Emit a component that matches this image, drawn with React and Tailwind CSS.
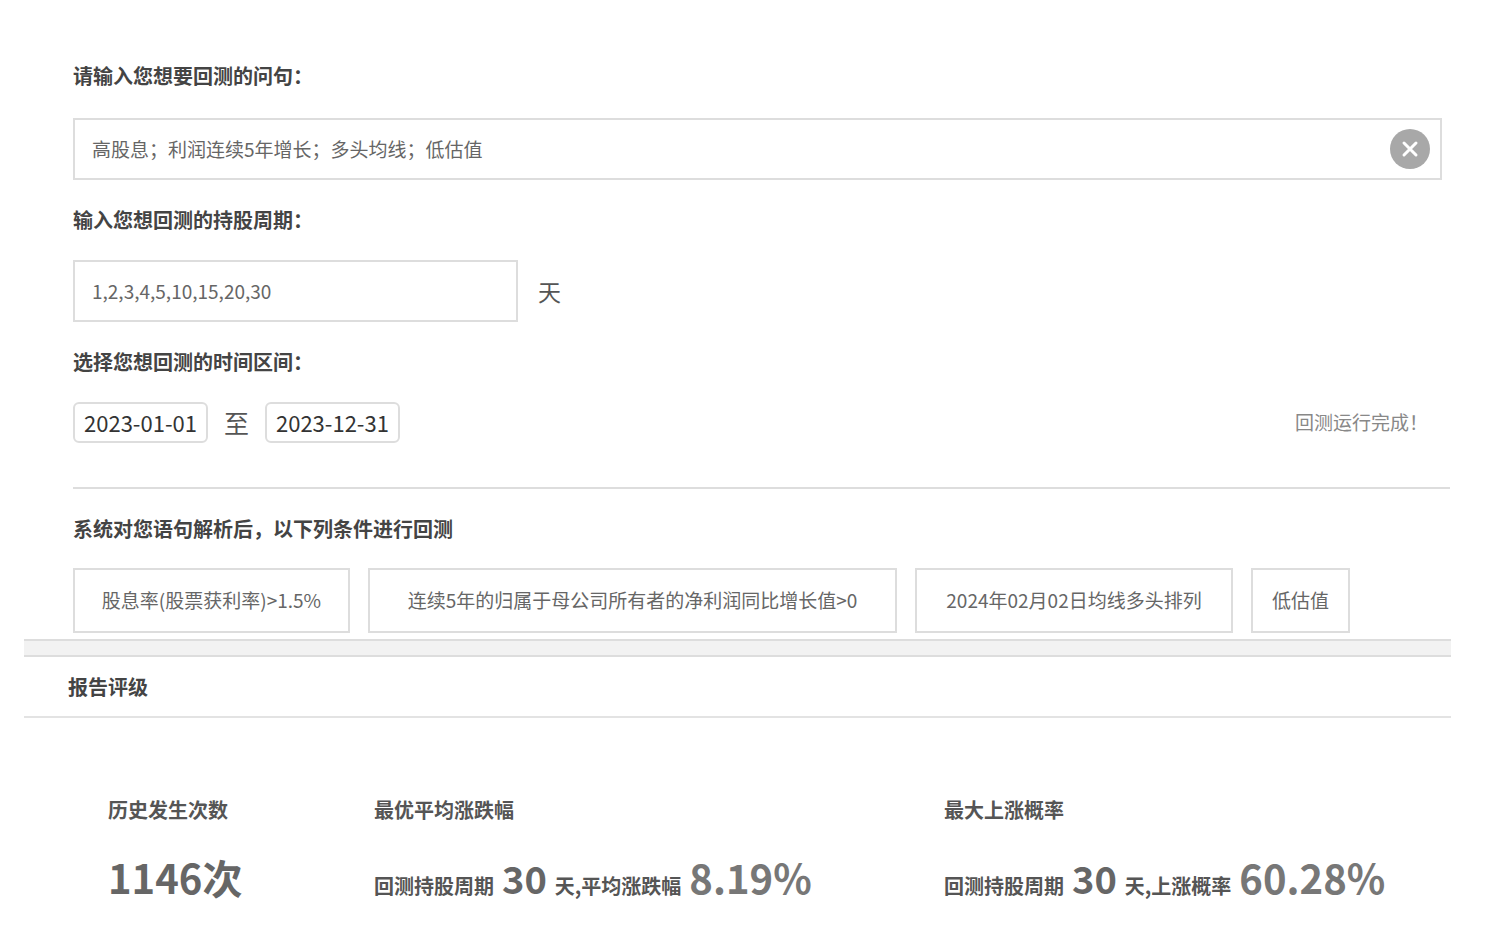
export default function App() {
  const f = { fontFamily: '"Noto Sans CJK SC", "Liberation Sans", sans-serif' };
  const tiles = [["股息率(股票获利率)>1.5%", "w-[277px]"], ["连续5年的归属于母公司所有者的净利润同比增长值>0", "w-[529px]"], ["2024年02月02日均线多头排列", "w-[318px]"], ["低估值", "w-[99px]"]];
  return (
    <div style={f} className="w-[1489px] h-[952px] bg-white text-[#555] overflow-hidden">
      <div className="pl-[73px] pr-[39px] pt-[60px]">
        <div className="text-[20px] font-bold text-[#444] h-[32px] leading-[32px]">请输入您想要回测的问句：</div>
        <div className="mt-[26px] w-[1369px] h-[62px] border-2 border-[#ddd] flex items-center pl-[17px] pr-[10px] justify-between">
          <span className="text-[19px] text-[#666]">高股息；利润连续5年增长；多头均线；低估值</span>
          <div className="w-[40px] h-[40px] rounded-full bg-[#a8a8a8] flex items-center justify-center">
            <svg width="18" height="18" viewBox="0 0 18 18"><path d="M3 3L15 15M15 3L3 15" stroke="white" strokeWidth="3" strokeLinecap="round"/></svg>
          </div>
        </div>
        <div className="mt-[24px] text-[20px] font-bold text-[#444] h-[32px] leading-[32px]">输入您想回测的持股周期：</div>
        <div className="mt-[24px] flex items-center">
          <div className="w-[445px] h-[62px] border-2 border-[#ddd] flex items-center pl-[17px] text-[19px] text-[#666]">1,2,3,4,5,10,15,20,30</div>
          <span className="ml-[20px] text-[23px] text-[#555]">天</span>
        </div>
        <div className="mt-[24px] text-[20px] font-bold text-[#444] h-[32px] leading-[32px]">选择您想回测的时间区间：</div>
        <div className="mt-[24px] flex items-center">
          <div className="h-[41px] px-[9px] border-2 border-[#ddd] rounded-[6px] flex items-center text-[22px] text-[#333]">2023-01-01</div>
          <span className="mx-[16px] text-[25px] text-[#555]">至</span>
          <div className="h-[41px] px-[9px] border-2 border-[#ddd] rounded-[6px] flex items-center text-[22px] text-[#333]">2023-12-31</div>
          <span className="ml-auto mr-[22px] text-[19px] text-[#888]">回测运行完成！</span>
        </div>
        <div className="mt-[44px] border-t-2 border-[#ddd]" />
        <div className="mt-[24px] text-[20px] font-bold text-[#444] h-[32px] leading-[32px]">系统对您语句解析后，以下列条件进行回测</div>
        <div className="mt-[23px] flex gap-[18px]">
          {tiles.map(([t, w]) => (
            <div key={t} className={`${w} h-[65px] border-2 border-[#ddd] flex items-center justify-center text-[19px] text-[#666] whitespace-nowrap`}>{t}</div>
          ))}
        </div>
      </div>
      <div className="ml-[24px] w-[1427px] h-[18px] mt-[6px] bg-[#f2f2f2] border-y-2 border-[#ddd]" />
      <div className="ml-[24px] w-[1427px] h-[61px] border-b-2 border-[#e3e3e3] flex items-center pl-[44px] text-[20px] font-bold text-[#444]">报告评级</div>
      <div className="flex mt-[76px] pl-[108px]">
        <div className="w-[266px]">
          <div className="text-[20px] font-bold text-[#555] h-[32px] leading-[32px]">历史发生次数</div>
          <div className="mt-[26px] text-[40px] font-bold text-[#666] leading-[50px]">1146次</div>
        </div>
        <div className="w-[570px]">
          <div className="text-[20px] font-bold text-[#555] h-[32px] leading-[32px]">最优平均涨跌幅</div>
          <div className="mt-[26px] leading-[50px] text-[#555] flex items-baseline">
            <span className="text-[20px] font-bold">回测持股周期</span>
            <span className="text-[38px] font-bold text-[#666] mx-[8px]">30</span>
            <span className="text-[20px] font-bold">天,平均涨跌幅</span>
            <span className="text-[40px] font-bold text-[#777] ml-[8px]">8.19%</span>
          </div>
        </div>
        <div>
          <div className="text-[20px] font-bold text-[#555] h-[32px] leading-[32px]">最大上涨概率</div>
          <div className="mt-[26px] leading-[50px] text-[#555] flex items-baseline">
            <span className="text-[20px] font-bold">回测持股周期</span>
            <span className="text-[38px] font-bold text-[#666] mx-[8px]">30</span>
            <span className="text-[20px] font-bold">天,上涨概率</span>
            <span className="text-[40px] font-bold text-[#777] ml-[8px]">60.28%</span>
          </div>
        </div>
      </div>
    </div>
  );
}
